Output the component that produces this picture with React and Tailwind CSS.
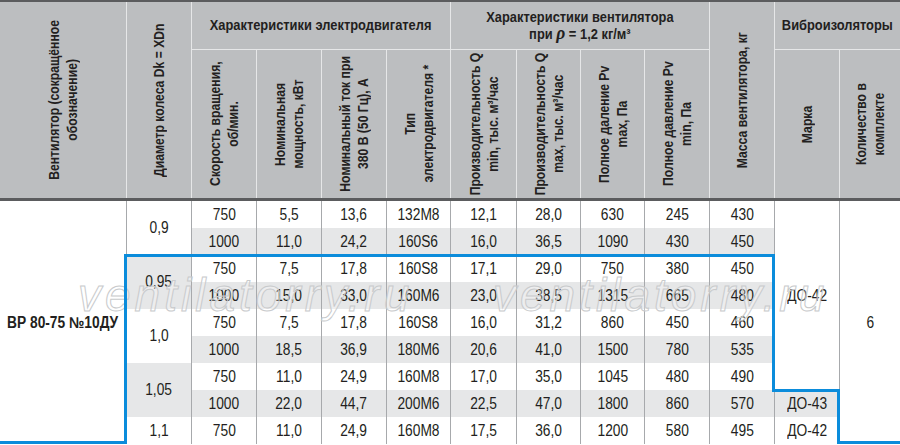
import React from 'react';

// ширины колонок таблицы (px)
const grid =
  'grid grid-cols-[126px_65px_65px_65px_65px_64px_66px_64px_64px_65px_65px_65px_61px]';

const rows = [
  ['750', '5,5', '13,6', '132M8', '12,1', '28,0', '630', '245', '430'],
  ['1000', '11,0', '24,2', '160S6', '16,0', '36,5', '1090', '430', '450'],
  ['750', '7,5', '17,8', '160S8', '17,1', '29,0', '750', '380', '450'],
  ['1000', '15,0', '33,0', '160M6', '23,0', '38,5', '1315', '665', '480'],
  ['750', '7,5', '17,8', '160S8', '16,0', '31,2', '860', '450', '460'],
  ['1000', '18,5', '36,9', '180M6', '20,6', '41,0', '1500', '780', '535'],
  ['750', '11,0', '24,9', '160M8', '17,0', '35,0', '1045', '480', '490'],
  ['1000', '22,0', '44,7', '200M6', '22,5', '47,0', '1800', '860', '570'],
  ['750', '11,0', '24,9', '160M8', '17,5', '36,0', '1200', '580', '495'],
];

// диаметр колеса: строка -> [значение, rowspan, серый фон]
const diameters = {
  0: ['0,9', 2, false],
  2: ['0,95', 2, true],
  4: ['1,0', 2, false],
  6: ['1,05', 2, true],
  8: ['1,1', 1, false],
};

const span = { 1: 'row-span-1', 2: 'row-span-2' };

const Vertical = ({ lines, className = '' }) => (
  <div
    className={`flex items-center justify-center border-l border-[#e6e7e8] ${className}`}
  >
    <div className="[writing-mode:vertical-rl] rotate-180 scale-y-[0.87] whitespace-nowrap text-center text-[14px] font-bold leading-[18px]">
      {lines.map((l, i) => (
        <div key={i}>{l}</div>
      ))}
    </div>
  </div>
);

const Num = ({ children, gray, className = '' }) => (
  <div
    className={`flex items-center justify-center border-l border-[#a7a9ac] ${
      gray ? 'bg-[#e6e7e8]' : 'bg-white'
    } ${className}`}
  >
    <span className="inline-block scale-x-[0.86] whitespace-nowrap text-[16px] leading-none">
      {children}
    </span>
  </div>
);

const Group = ({ children, className = '' }) => (
  <div
    className={`flex items-center justify-center border-l border-b border-[#e6e7e8] ${className}`}
  >
    <span className="inline-block scale-x-[0.92] whitespace-nowrap text-center text-[14px] font-bold leading-[15px]">
      {children}
    </span>
  </div>
);

export default function App() {
  return (
    <div className="relative w-[900px] h-[445px] overflow-hidden bg-white font-['Liberation_Sans',Arial,sans-serif] text-[#231f20]">
      {/* ===== шапка ===== */}
      <div
        className={`${grid} grid-rows-[48px_148px] bg-[#bcbec0] border-t-2 border-b-[3px] border-[#5b5c5e]`}
      >
        <Vertical
          className="row-span-2 border-l-0"
          lines={['Вентилятор (сокращённое', 'обозначение)']}
        />
        <Vertical className="row-span-2" lines={['Диаметр колеса Dk = XDn']} />

        <Group className="col-span-4">Характеристики электродвигателя</Group>
        <Group className="col-span-4">
          Характеристики вентилятора
          <br />
          при{' '}
          <span className="font-['Liberation_Serif',serif] text-[19px] font-bold italic leading-[15px]">
            ρ
          </span>{' '}
          = 1,2 кг/м³
        </Group>
        <Vertical className="row-span-2" lines={['Масса вентилятора, кг']} />
        <Group className="col-span-2">Виброизоляторы</Group>

        <Vertical lines={['Скорость вращения,', 'об/мин.']} />
        <Vertical lines={['Номинальная', 'мощность, кВт']} />
        <Vertical lines={['Номинальный ток при', '380 В (50 Гц), А']} />
        <Vertical lines={['Тип', 'электродвигателя *']} />
        <Vertical lines={['Производительность Q', 'min, тыс. м³/час']} />
        <Vertical lines={['Производительность Q', 'max, тыс. м³/час']} />
        <Vertical lines={['Полное даление Pv', 'max, Па']} />
        <Vertical lines={['Полное давление Pv', 'min, Па']} />
        <Vertical lines={['Марка']} />
        <Vertical lines={['Количество в', 'комплекте']} />
      </div>

      {/* ===== данные ===== */}
      <div className={`${grid} grid-rows-[repeat(9,27px)]`}>
        {rows.map((r, i) => {
          const gray = i % 2 === 1;
          const d = diameters[i];
          return (
            <React.Fragment key={i}>
              {i === 0 && (
                <div className="row-span-9 flex items-center justify-center bg-white">
                  <span className="inline-block scale-x-[0.86] whitespace-nowrap text-[16px] font-bold">
                    ВР 80-75 №10ДУ
                  </span>
                </div>
              )}
              {d && (
                <Num gray={d[2]} className={span[d[1]]}>
                  {d[0]}
                </Num>
              )}
              {r.map((v, j) => (
                <Num key={j} gray={gray}>
                  {v}
                </Num>
              ))}
              {i === 0 && <Num className="row-span-7">ДО-42</Num>}
              {i === 0 && <Num className="row-span-9">6</Num>}
              {i === 7 && <Num gray>ДО-43</Num>}
              {i === 8 && <Num>ДО-42</Num>}
            </React.Fragment>
          );
        })}
      </div>

      {/* ===== водяные знаки ===== */}
      <div className="pointer-events-none absolute left-[78px] top-[272px] whitespace-nowrap text-[46px] italic leading-none tracking-[4px] text-white/30 [-webkit-text-stroke:1px_#c8cacc]">
        ventilatorry.ru
      </div>
      <div className="pointer-events-none absolute left-[493px] top-[272px] whitespace-nowrap text-[46px] italic leading-none tracking-[4px] text-white/30 [-webkit-text-stroke:1px_#c8cacc]">
        ventilatorry.ru
      </div>

      {/* ===== синяя рамка выделения ===== */}
      <div className="absolute left-[124px] top-[254px] h-[3px] w-[651px] bg-[#0b8cdb]" />
      <div className="absolute left-[124px] top-[254px] h-[190px] w-[3px] bg-[#0b8cdb]" />
      <div className="absolute left-0 top-[441px] h-[3px] w-[127px] bg-[#0b8cdb]" />
      <div className="absolute left-[772px] top-[254px] h-[137px] w-[3px] bg-[#0b8cdb]" />
      <div className="absolute left-[772px] top-[389px] h-[3px] w-[68px] bg-[#0b8cdb]" />
      <div className="absolute left-[837px] top-[389px] h-[55px] w-[3px] bg-[#0b8cdb]" />
      <div className="absolute left-[837px] top-[441px] h-[3px] w-[63px] bg-[#0b8cdb]" />
    </div>
  );
}
